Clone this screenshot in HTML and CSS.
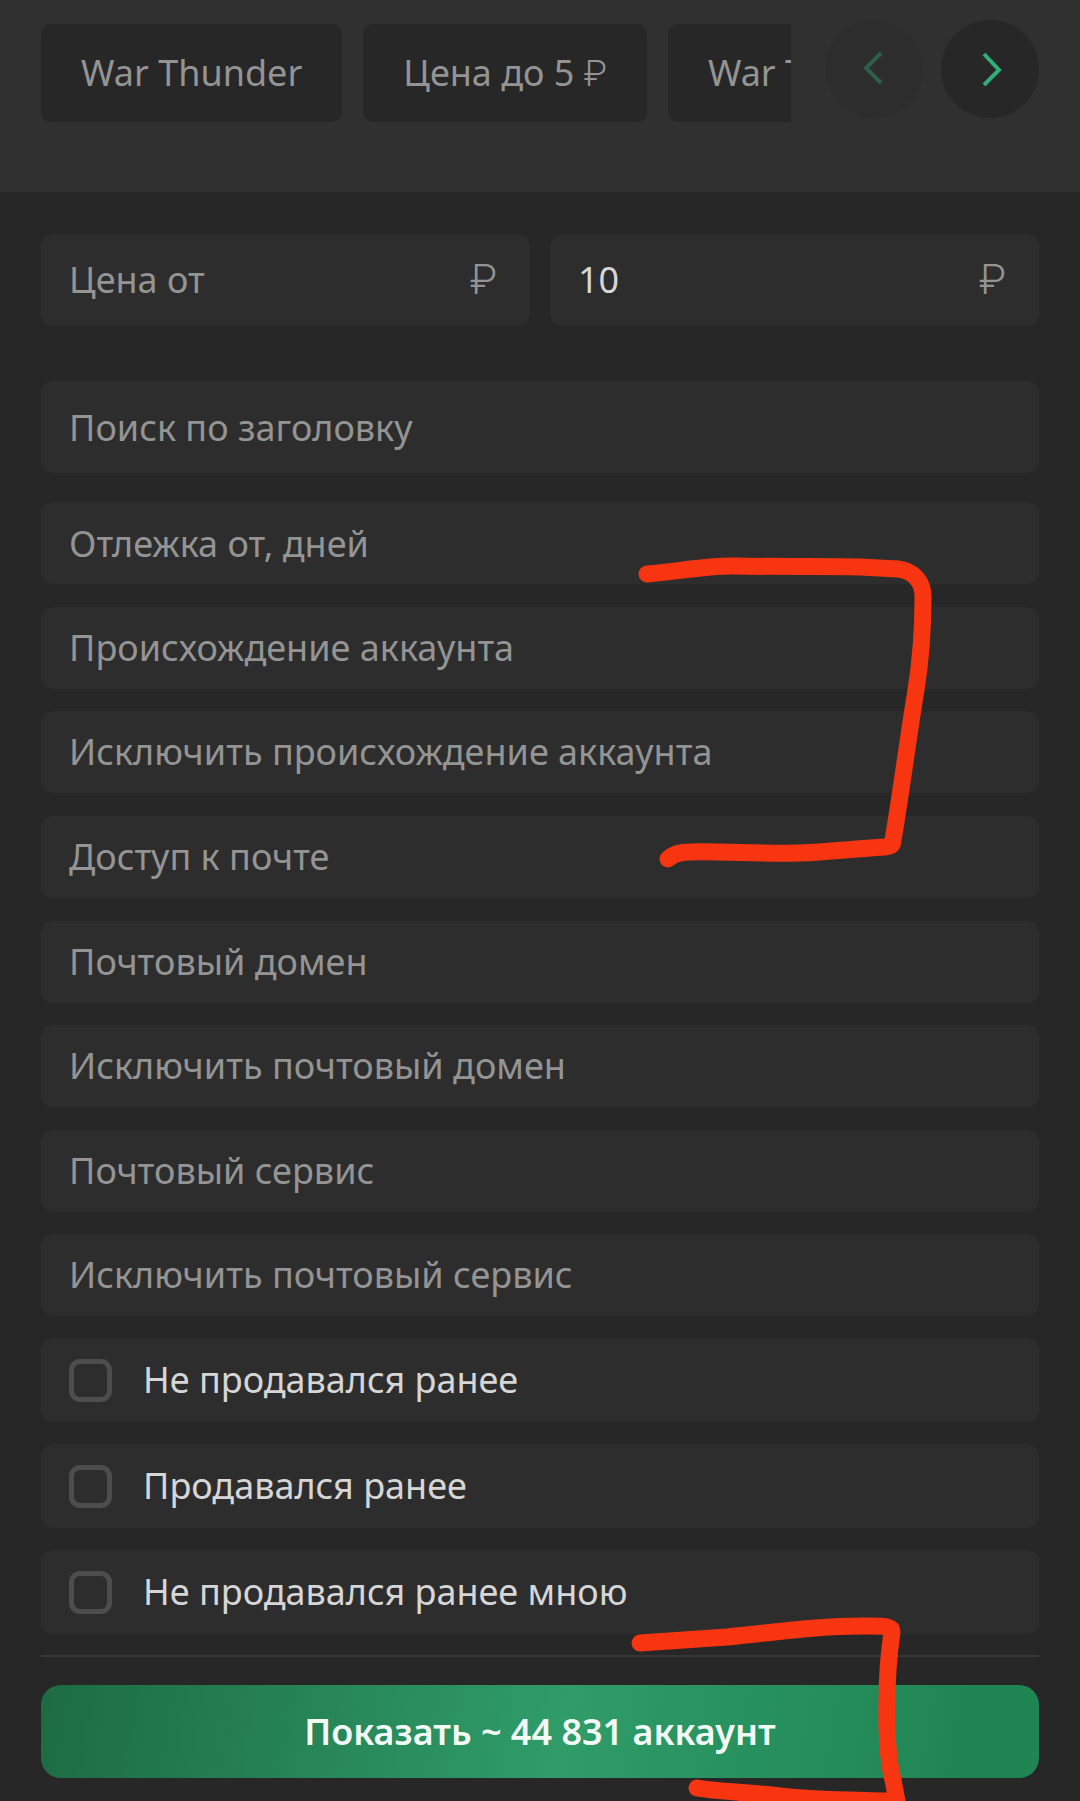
FILE: index.html
```html
<!DOCTYPE html>
<html lang="ru">
<head>
    <meta charset="UTF-8">
    <meta name="viewport" content="width=device-width, initial-scale=1.0">
    <title>War Thunder</title>
    <link rel="stylesheet" href="styles.css">
</head>
<body>
    <div class="page">
        <header class="header">
            <nav class="chips">
                <a class="chip" href="#">War Thunder</a>
                <a class="chip" href="#">Цена до 5 <span class="chip-rub">₽</span></a>
                <a class="chip" href="#">War Thunder</a>
            </nav>
            <div class="arrows">
                <button class="arrow" type="button" aria-label="Назад" disabled>
                    <svg width="34" height="34" viewBox="0 0 34 34"><path d="M24 1L9 16l15 15"/></svg>
                </button>
                <button class="arrow" type="button" aria-label="Вперёд">
                    <svg width="34" height="34" viewBox="0 0 34 34"><path d="M11 2l15 16-15 15"/></svg>
                </button>
            </div>
        </header>

        <form class="filters">
            <div class="price">
                <label class="field price-field">
                    <input class="control" type="text" name="pmin" placeholder="Цена от" aria-label="Цена от">
                    <span class="rub">₽</span>
                </label>
                <label class="field price-field">
                    <input class="control" type="text" name="pmax" value="10" aria-label="Цена до">
                    <span class="rub">₽</span>
                </label>
            </div>

            <input class="field control search" type="text" name="title" placeholder="Поиск по заголовку" aria-label="Поиск по заголовку">

            <div class="rows">
                <input class="field control row" type="text" name="daybreak" placeholder="Отлежка от, дней" aria-label="Отлежка от, дней">
                <div class="pair">
                    <select class="field control row" name="origin" aria-label="Происхождение аккаунта">
                        <option>Происхождение аккаунта</option>
                    </select>
                    <select class="field control row" name="not_origin" aria-label="Исключить происхождение аккаунта">
                        <option>Исключить происхождение аккаунта</option>
                    </select>
                </div>
                <select class="field control row" name="email_type" aria-label="Доступ к почте">
                    <option>Доступ к почте</option>
                </select>
                <div class="pair">
                    <select class="field control row" name="domain" aria-label="Почтовый домен">
                        <option>Почтовый домен</option>
                    </select>
                    <select class="field control row" name="not_domain" aria-label="Исключить почтовый домен">
                        <option>Исключить почтовый домен</option>
                    </select>
                </div>
                <div class="pair">
                    <select class="field control row" name="provider" aria-label="Почтовый сервис">
                        <option>Почтовый сервис</option>
                    </select>
                    <select class="field control row" name="not_provider" aria-label="Исключить почтовый сервис">
                        <option>Исключить почтовый сервис</option>
                    </select>
                </div>
            </div>

            <div class="checks">
                <label class="field check"><input type="checkbox" name="nsb">Не продавался ранее</label>
                <label class="field check"><input type="checkbox" name="sb">Продавался ранее</label>
                <label class="field check"><input type="checkbox" name="nsb_by_me">Не продавался ранее мною</label>
            </div>

            <div class="submit-bar">
                <button class="submit" type="submit">Показать ~ 44 831 аккаунт</button>
            </div>
        </form>

        <!-- red marker strokes -->
        <svg class="marks" width="1080" height="1801" viewBox="0 0 1080 1801" aria-hidden="true">
            <path d="M647 574C680 571 705 566 733 566C780 567 840 566 860 567L898 569C914 571 923 582 923 597C923 635 920 665 916 690C907 745 900 800 893 840C893 846 891 846 885 847C850 849 830 852 800 853C760 854 720 851 690 852C680 852 673 854 668 859"/>
            <path d="M640 1643L727 1637C770 1633 820 1625 870 1626C888 1626 892 1627 892 1632C888 1660 887 1680 887 1700C886 1745 889 1765 893 1780L897 1801L887 1801C850 1800 810 1800 780 1796C750 1792 720 1792 697 1788"/>
        </svg>
    </div>
</body>
</html>
```
FILE: styles.css
```css
* {
    box-sizing: border-box;
}
body {
    margin: 0;
    background: #272727;
    color: #d6d6d6;
    font-family: "Noto Sans", "Open Sans", sans-serif;
    font-size: 36px;
    line-height: 48px;
}
.page {
    position: relative;
    overflow: hidden;
}
.header {
    display: flex;
    gap: 34px;
    height: 192px;
    padding: 20px 41px 0;
    background: #303030;
}
.chips {
    display: flex;
    flex: 1;
    align-items: flex-start;
    gap: 21px;
    min-width: 0;
    padding-top: 4px;
    overflow: hidden;
}
.chip {
    flex: none;
    padding: 25px 40px;
    border-radius: 10px;
    background: #272727;
    color: #949494;
    text-decoration: none;
    white-space: nowrap;
}
.chip-rub {
    font-family: Roboto, sans-serif;
    font-weight: 300;
    line-height: 1;
}
.arrows {
    display: flex;
    gap: 18px;
}
.arrow {
    display: flex;
    align-items: center;
    justify-content: center;
    width: 98px;
    height: 98px;
    padding: 0;
    border: none;
    border-radius: 50%;
    background: #272727;
}
.arrow:disabled {
    background: #2d2d2d;
}
.arrow path {
    fill: none;
    stroke: #2fae78;
    stroke-width: 4;
}
.arrow:disabled path {
    stroke: #2d5f4a;
}
.filters {
    padding: 42px 41px 23px;
}
.field {
    border: none;
    border-radius: 12px;
    background: #2d2d2d;
}
.control {
    display: block;
    width: 100%;
    margin: 0;
    padding: 0 28px;
    color: #d6d6d6;
    font: inherit;
    outline: none;
}
.control::placeholder {
    color: #949494;
    opacity: 1;
}
select.control {
    appearance: none;
    color: #949494;
}
.price {
    display: grid;
    grid-template-columns: 1fr 1fr;
    gap: 20px;
}
.price-field {
    display: flex;
    align-items: center;
    height: 92px;
    padding-right: 33px;
}
.price-field .control {
    flex: 1;
    min-width: 0;
    border: none;
    background: none;
}
.rub {
    color: #949494;
    font-family: Roboto, sans-serif;
    font-size: 42px;
    font-weight: 300;
}
.search {
    height: 92px;
    margin-top: 55px;
}
.rows {
    display: flex;
    flex-direction: column;
    gap: 23px;
    margin-top: 29px;
}
.pair {
    display: flex;
    flex-direction: column;
    gap: 22px;
}
.row {
    height: 82px;
}
.checks {
    display: flex;
    flex-direction: column;
    gap: 22px;
    margin-top: 22px;
}
.check {
    display: flex;
    align-items: center;
    gap: 31px;
    height: 84px;
    padding: 0 28px;
}
.check input {
    appearance: none;
    width: 43px;
    height: 43px;
    margin: 0;
    border: 5px solid #4d4d4d;
    border-radius: 11px;
}
.check input:checked {
    background: #2fae78;
}
.submit-bar {
    margin-top: 21px;
    padding-top: 28px;
    border-top: 2px solid #363636;
}
.submit {
    display: block;
    width: 100%;
    height: 93px;
    padding: 0;
    border: none;
    border-radius: 20px;
    background: linear-gradient(100deg, #1d6b43, #2f9c69 52%, #1f8553 92%);
    color: #f2fbf6;
    font: inherit;
    font-weight: 600;
}
.marks {
    position: absolute;
    top: 0;
    left: 0;
    pointer-events: none;
}
.marks path {
    fill: none;
    stroke: #f73510;
    stroke-width: 17;
    stroke-linecap: round;
    stroke-linejoin: round;
}
```
